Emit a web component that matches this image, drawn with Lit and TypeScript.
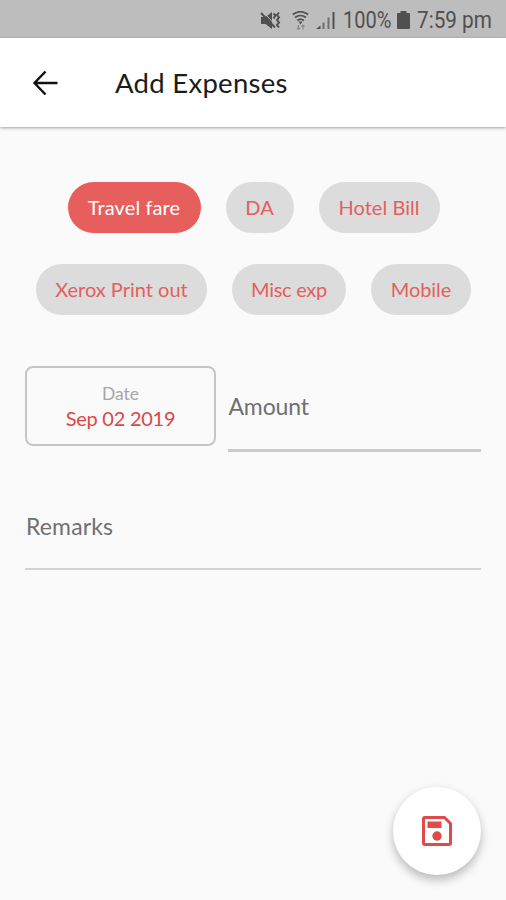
import { LitElement, html, css } from "lit";
import { customElement, property, state } from "lit/decorators.js";
import { classMap } from "lit/directives/class-map.js";
import { styleMap } from "lit/directives/style-map.js";

interface Choice {
  label: string;
  width: number;
  tracking: number;
}

@customElement("status-bar")
class StatusBar extends LitElement {
  static styles = css`
    :host { display: flex; height: 38px; box-sizing: border-box; background: #bdbdbd; color: #505050;
      align-items: center; padding: 3px 14px 0 259px; font: 400 23px/35px Roboto, "Noto Sans", sans-serif; }
    svg { display: block; flex: none; }
    .mute { margin-right: 10px; }
    .wifi { margin-right: 7px; }
    .signal { margin-right: 7px; }
    .pct { width: 49px; flex: none; }
    .battery { margin: 0 7px 0 5px; }
    .time { flex: none; width: 76px; }
    .narrow { display: inline-block; white-space: nowrap; transform-origin: 0 50%; transform: scaleX(0.87); }
    .time .narrow { transform: scaleX(0.9); }
  `;
  render() {
    return html`
      <svg class="mute" width="23" height="20" viewBox="0 0 23 20" fill="currentColor">
        <path d="M2 6h4.500L13 1v17l-6.500-5H2z" />
        <path d="M4.500 1l14 15.500" stroke="#bdbdbd" stroke-width="1" />
        <path d="M2 2l14 14.500" stroke="currentColor" stroke-width="2" />
        <path d="M14.500 2.500l2 2-2 3M20 1.500l-2 2.500 2 2.500-2 2.500 2 2.500-2 2.500 2 2.500" fill="none" stroke="currentColor" stroke-width="2" />
      </svg>
      <svg class="wifi" width="17" height="20" viewBox="0 0 17 20" fill="none" stroke="currentColor" stroke-width="1.700">
        <path d="M.8 3.500Q8.500-2 16.200 3.500M3 6.500q5.500-4 11 0M5.200 9.500q3.300-2.600 6.600 0" />
        <path d="M6.500 10.500h4l-2 3z" fill="currentColor" stroke="none" />
        <path d="M6.500 14v4.500M5 17l1.500 1.500L8 17M11 18.500v-4.500M9.500 15.500L11 14l1.500 1.500" stroke="#8c8c8c" stroke-width="1.200" />
      </svg>
      <svg class="signal" width="20" height="19" viewBox="0 0 20 19" fill="currentColor">
        <path d="M0 18l4.500-3.500v3.500z" /><path d="M6.500 11.500h2v6.500h-2zM11.500 6.500h2v11.500h-2z" opacity=".7" /><path d="M16.500 1h2v17h-2z" />
      </svg>
      <span class="pct"><span class="narrow">100%</span></span>
      <svg class="battery" width="13" height="19" viewBox="0 0 13 19" fill="currentColor"><path d="M3.500 0h6v2H12q1 0 1 1v14q0 1-1 1H1q-1 0-1-1V3q0-1 1-1h2.500z" /></svg>
      <span class="time"><span class="narrow">7:59 pm</span></span>
    `;
  }
}

@customElement("app-header")
class AppHeader extends LitElement {
  @property() heading = "";
  static styles = css`
    :host { display: flex; align-items: center; height: 89px; box-sizing: border-box; padding: 0 32px; background: #fff;
      box-shadow: 0 1px 3px rgba(0, 0, 0, 0.36); position: relative; }
    svg { display: block; flex: none; margin-right: 57px; }
    h1 { margin: 0; font: 400 27.500px/36px Lato, sans-serif; letter-spacing: 0.280px; color: #1c1c1c; white-space: nowrap; }
  `;
  render() {
    return html`
      <svg width="26" height="26" viewBox="0 0 26 26" fill="none" stroke="#111" stroke-width="2.400">
        <path d="M13.500 1.500L2.500 13l11 11.500M2.500 13H25.500" />
      </svg>
      <h1>${this.heading}</h1>
    `;
  }
}

@customElement("choice-chip")
class ChoiceChip extends LitElement {
  @property({ attribute: false }) choice: Choice = { label: "", width: 0, tracking: 0 };
  @property({ type: Boolean }) selected = false;
  static styles = css`
    :host { display: block; }
    .chip { height: 51px; border: 0; margin: 0; padding: 0; border-radius: 26px; background: #dcdcdc; color: #e2605d;
      font: 400 20px/51px Lato, sans-serif; white-space: nowrap; display: block; text-align: center; }
    .on { background: #e65f5c; color: #fff; }
  `;
  render() {
    const { label, width, tracking } = this.choice;
    return html`<button class=${classMap({ chip: true, on: this.selected })}
      style=${styleMap({ width: `${width}px`, letterSpacing: `${tracking}px` })}>${label}</button>`;
  }
}

@customElement("app-root")
class AppRoot extends LitElement {
  @state() private selected = "Travel fare";
  private rows: Choice[][] = [
    [
      { label: "Travel fare", width: 133, tracking: 0.1 },
      { label: "DA", width: 68, tracking: 0 },
      { label: "Hotel Bill", width: 121, tracking: 0.05 },
    ],
    [
      { label: "Xerox Print out", width: 171, tracking: 0 },
      { label: "Misc exp", width: 114, tracking: -0.3 },
      { label: "Mobile", width: 100, tracking: -0.1 },
    ],
  ];
  static styles = css`
    :host { display: flex; flex-direction: column; height: 900px; background: #fafafa; font-family: Lato, sans-serif; position: relative; overflow: hidden; }
    main { padding: 55px 25px 0; }
    .chips { display: grid; gap: 31px; }
    .row { display: flex; justify-content: center; gap: 25px; padding-left: 1px; }
    .fields { display: flex; gap: 12px; margin-top: 51px; align-items: flex-start; }
    .date { width: 191px; height: 80px; box-sizing: border-box; border: 2px solid #c6c6c6; border-radius: 8px; text-align: center; padding-top: 13px; }
    .caption { font-size: 17.500px; line-height: 25px; color: #a6a6a6; }
    .value { font-size: 20px; line-height: 25px; letter-spacing: -0.250px; color: #dc4644; }
    .field { box-sizing: border-box; color: #707070; font-size: 23px; line-height: 30px; }
    .amount { flex: 1; height: 86px; padding-top: 25px; border-bottom: 3px solid #cbc9c9; letter-spacing: -0.150px; padding-left: 0.500px; }
    .remarks { height: 118px; padding: 59px 0 0 1px; border-bottom: 2px solid #d3d3d3; letter-spacing: 0.150px; }
    .save { position: absolute; right: 25px; bottom: 25px; width: 88px; height: 88px; padding: 0; border: 0; border-radius: 50%; background: #fff;
      display: grid; place-items: center; box-shadow: 0 6px 10px rgba(0, 0, 0, 0.2), 0 1px 10px rgba(0, 0, 0, 0.08); }
  `;
  render() {
    return html`
      <status-bar></status-bar>
      <app-header heading="Add Expenses"></app-header>
      <main>
        <div class="chips">
          ${this.rows.map((row) => html`<div class="row">${row.map((choice) => html`
            <choice-chip .choice=${choice} .selected=${choice.label === this.selected} @click=${() => (this.selected = choice.label)}></choice-chip>`)}</div>`)}
        </div>
        <div class="fields">
          <div class="date"><div class="caption">Date</div><div class="value">Sep 02 2019</div></div>
          <div class="field amount">Amount</div>
        </div>
        <div class="field remarks">Remarks</div>
      </main>
      <button class="save" aria-label="Save">
        <svg width="30" height="30" viewBox="0 0 30 30" fill="#e04a48">
          <path d="M3 1.500h19.500l6 6V27q0 1.500-1.500 1.500H3Q1.500 28.500 1.500 27V3Q1.500 1.500 3 1.500z" fill="none" stroke="#e04a48" stroke-width="3" />
          <path d="M5.500 5.500h14v6.500h-14z" /><circle cx="15" cy="20" r="4.700" />
        </svg>
      </button>
    `;
  }
}
